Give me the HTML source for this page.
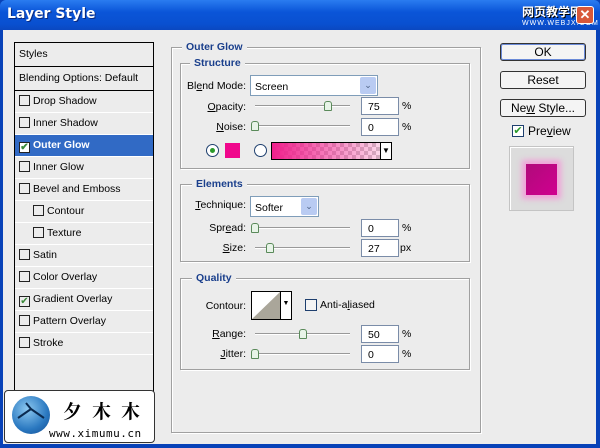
<!DOCTYPE html><html><head><meta charset="utf-8"><style>
*{margin:0;padding:0;box-sizing:border-box}
body{width:600px;height:448px;overflow:hidden;font-family:"Liberation Sans",sans-serif;font-size:10.5px;color:#000;position:relative;background:#0842b8}
.a{position:absolute}
#win{left:3px;top:30px;width:593px;height:414px;background:#ececec}
#title{left:0;top:0;width:600px;height:30px;background:linear-gradient(#2a7cf0,#0a55d8 40%,#0950d0 80%,#0a48c0);border-radius:6px 6px 0 0}
#title span{position:absolute;left:7px;top:6px;color:#fff;font-weight:bold;font-size:14px;font-family:"DejaVu Sans",sans-serif;text-shadow:1px 1px #0a2a80}
.list{left:14px;top:42px;width:140px;height:360px;border:1px solid #000;background:#ececec}
.row{position:absolute;left:0;width:138px;height:22px;border-bottom:1px solid #fff;line-height:21px;padding-left:4px;white-space:nowrap}
.cb{display:inline-block;width:11px;height:11px;border:1px solid #222;background:#ececec;vertical-align:-2px;margin-right:3px;position:relative}
.g{position:absolute;border:1px solid #a0a0a0;box-shadow:1px 1px 0 #fff,inset 1px 1px 0 #fff}
.gt{position:absolute;background:#ececec;color:#1a3f8c;font-weight:bold;padding:0 4px;font-size:10.5px}
.lbl{position:absolute;text-align:right;width:70px}
.tb{position:absolute;background:#fff;border:1px solid #7a8ca8;height:18px;width:38px;padding:3px 6px}
.pct{position:absolute}
.sl{position:absolute;height:2px;border-top:1px solid #999;border-bottom:1px solid #fff;width:95px}
.th{position:absolute;width:8px;height:10px;background:#e8f4e8;border:1px solid #5a8a5a;border-radius:3px 3px 1px 1px}
.sel{position:absolute;background:#fff;border:1px solid #7f9db9;height:21px}
.dd{position:absolute;right:1px;top:1px;width:16px;height:17px;background:#b9cbf2;border-radius:2px;color:#4d6185;font-size:9px;text-align:center;line-height:17px}
.btn{position:absolute;left:500px;width:86px;height:18px;border:1px solid #333;border-radius:3px;background:#f4f4f4;text-align:center;font-size:12px;line-height:16px;font-family:"Liberation Sans",sans-serif}
u{text-decoration:underline}
</style></head><body>
<div id="title" class="a"><span>Layer Style</span>
<div class="a" style="left:522px;top:5px;font-size:12px;color:#fff;font-family:'Noto Sans CJK SC',sans-serif;font-weight:bold;text-shadow:1px 1px #000;line-height:13px">网页教学网</div>
<div class="a" style="left:522px;top:20px;font-size:7px;color:#fff;letter-spacing:1px">WWW.WEBJX.COM</div>
<div class="a" style="left:576px;top:6px;width:18px;height:18px;background:#d8583a;border:1px solid #fff;border-radius:3px;color:#fff;font-weight:bold;text-align:center;line-height:16px;font-size:13px">✕</div>
</div>
<div id="win" class="a"></div>

<div class="a list">
<div class="row" style="top:0;height:24px;border-bottom:1px solid #000;line-height:22px">Styles</div>
<div class="row" style="top:24px;height:24px;border-bottom:1px solid #000;line-height:22px">Blending Options: Default</div>
<div class="row" style="top:48px"><span class="cb"></span>Drop Shadow</div>
<div class="row" style="top:70px"><span class="cb"></span>Inner Shadow</div>
<div class="row" style="top:92px;background:#316ac5;color:#fff;font-weight:bold"><span class="cb" style="background:#fff;color:#3a8a3a;font-size:10px;line-height:9px;text-align:center">✔</span>Outer Glow</div>
<div class="row" style="top:114px"><span class="cb"></span>Inner Glow</div>
<div class="row" style="top:136px"><span class="cb"></span>Bevel and Emboss</div>
<div class="row" style="top:158px;padding-left:18px"><span class="cb"></span>Contour</div>
<div class="row" style="top:180px;padding-left:18px"><span class="cb"></span>Texture</div>
<div class="row" style="top:202px"><span class="cb"></span>Satin</div>
<div class="row" style="top:224px"><span class="cb"></span>Color Overlay</div>
<div class="row" style="top:246px"><span class="cb" style="color:#3a8a3a;font-size:10px;line-height:9px;text-align:center">✔</span>Gradient Overlay</div>
<div class="row" style="top:268px"><span class="cb"></span>Pattern Overlay</div>
<div class="row" style="top:290px"><span class="cb"></span>Stroke</div>
</div>

<div class="a" style="left:4px;top:390px;width:151px;height:53px;background:#fff;border:1px solid #333;border-radius:4px">
<div class="a" style="left:7px;top:5px;width:38px;height:38px;border-radius:50%;background:radial-gradient(circle at 40% 35%,#8cc8f0,#2a78c0 60%,#124a90)"></div>
<svg class="a" style="left:7px;top:5px" width="38" height="38"><path d="M6 22 L19 13 L32 22 M19 13 L14 7" stroke="#0a2a50" stroke-width="2" fill="none"/></svg>
<div class="a" style="left:58px;top:6px;font-size:19px;font-family:'Noto Serif CJK SC',serif;font-weight:bold;letter-spacing:10px">夕木木</div>
<div class="a" style="left:44px;top:36px;font-size:11px;font-family:'DejaVu Sans Mono',monospace;letter-spacing:0.5px">www.ximumu.cn</div>
</div>

<div class="g" style="left:171px;top:47px;width:310px;height:386px"></div>
<div class="gt" style="left:182px;top:41px">Outer Glow</div>
<div class="g" style="left:180px;top:63px;width:290px;height:106px"></div>
<div class="gt" style="left:190px;top:57px">Structure</div>
<div class="lbl" style="left:176px;top:80px">Bl<u>e</u>nd Mode:</div>
<div class="sel" style="left:250px;top:75px;width:128px"><span class="a" style="left:4px;top:5px">Screen</span><div class="dd">⌄</div></div>
<div class="lbl" style="left:176px;top:101px"><u>O</u>pacity:</div>
<div class="sl" style="left:255px;top:105px"></div><div class="th" style="left:324px;top:101px"></div>
<div class="tb" style="left:361px;top:97px">75</div><div class="pct" style="left:402px;top:100px">%</div>
<div class="lbl" style="left:176px;top:121px"><u>N</u>oise:</div>
<div class="sl" style="left:255px;top:125px"></div><div class="th" style="left:251px;top:121px"></div>
<div class="tb" style="left:361px;top:118px">0</div><div class="pct" style="left:402px;top:121px">%</div>
<div class="a" style="left:206px;top:144px;width:13px;height:13px;border-radius:50%;border:1px solid #1e3f6e;background:#fff"><div class="a" style="left:3px;top:3px;width:5px;height:5px;border-radius:50%;background:#2a9a2a"></div></div>
<div class="a" style="left:225px;top:143px;width:15px;height:15px;background:#f0078c"></div>
<div class="a" style="left:254px;top:144px;width:13px;height:13px;border-radius:50%;border:1px solid #1e3f6e;background:#fff"></div>
<div class="a" style="left:271px;top:142px;width:121px;height:18px;border:1px solid #000;background:linear-gradient(90deg,#f0208c,rgba(240,32,140,0.1)),repeating-conic-gradient(#ccc 0 25%,#fff 0 50%) 0 0/8px 8px"><div class="a" style="right:0;top:0;width:11px;height:16px;background:#fff;border-left:1px solid #000;font-size:8px;text-align:center;line-height:16px">▼</div></div>

<div class="g" style="left:180px;top:184px;width:290px;height:78px"></div>
<div class="gt" style="left:192px;top:178px">Elements</div>
<div class="lbl" style="left:176px;top:199px"><u>T</u>echnique:</div>
<div class="sel" style="left:250px;top:196px;width:69px"><span class="a" style="left:4px;top:5px">Softer</span><div class="dd">⌄</div></div>
<div class="lbl" style="left:176px;top:222px">Spr<u>e</u>ad:</div>
<div class="sl" style="left:255px;top:227px"></div><div class="th" style="left:251px;top:223px"></div>
<div class="tb" style="left:361px;top:219px">0</div><div class="pct" style="left:402px;top:222px">%</div>
<div class="lbl" style="left:176px;top:242px"><u>S</u>ize:</div>
<div class="sl" style="left:255px;top:247px"></div><div class="th" style="left:266px;top:243px"></div>
<div class="tb" style="left:361px;top:239px">27</div><div class="pct" style="left:400px;top:242px">px</div>

<div class="g" style="left:180px;top:278px;width:290px;height:92px"></div>
<div class="gt" style="left:192px;top:272px">Quality</div>
<div class="lbl" style="left:176px;top:300px">Contour:</div>
<div class="a" style="left:251px;top:291px;width:41px;height:29px;border:1px solid #000;background:#fff"><svg width="28" height="27" class="a" style="left:0;top:0"><path d="M0 27 L28 0 L28 27Z" fill="#aaa69a"/></svg><div class="a" style="right:0;top:0;width:11px;height:27px;border-left:1px solid #000;font-size:7px;text-align:center;line-height:24px">▼</div></div>
<div class="a" style="left:305px;top:299px;width:12px;height:12px;border:1px solid #1e3f6e;background:#f4f4f4"></div>
<div class="a" style="left:320px;top:299px">Anti-a<u>l</u>iased</div>
<div class="lbl" style="left:176px;top:328px"><u>R</u>ange:</div>
<div class="sl" style="left:255px;top:333px"></div><div class="th" style="left:299px;top:329px"></div>
<div class="tb" style="left:361px;top:325px">50</div><div class="pct" style="left:402px;top:328px">%</div>
<div class="lbl" style="left:176px;top:348px"><u>J</u>itter:</div>
<div class="sl" style="left:255px;top:353px"></div><div class="th" style="left:251px;top:349px"></div>
<div class="tb" style="left:361px;top:345px">0</div><div class="pct" style="left:402px;top:348px">%</div>

<div class="btn" style="top:43px;box-shadow:inset 0 0 0 1px #6a8ad8">OK</div>
<div class="btn" style="top:71px">Reset</div>
<div class="btn" style="top:99px">Ne<u>w</u> Style...</div>
<div class="a" style="left:512px;top:125px;width:12px;height:12px;border:1px solid #1e3f6e;background:#fff;color:#2a9a2a;font-size:11px;line-height:10px;text-align:center">✔</div>
<div class="a" style="left:528px;top:124px;font-size:12px;font-family:'Liberation Sans',sans-serif">Pre<u>v</u>iew</div>
<div class="a" style="left:509px;top:146px;width:65px;height:65px;background:#dcdcdc;border:1px solid #c4c4c4;box-shadow:inset 1px 1px 0 #fff"></div>
<div class="a" style="left:522px;top:160px;width:39px;height:39px;background:#f0a0d8;filter:blur(3px)"></div>
<div class="a" style="left:526px;top:164px;width:31px;height:31px;background:linear-gradient(135deg,#b00a7a,#d00090)"></div>
</body></html>
